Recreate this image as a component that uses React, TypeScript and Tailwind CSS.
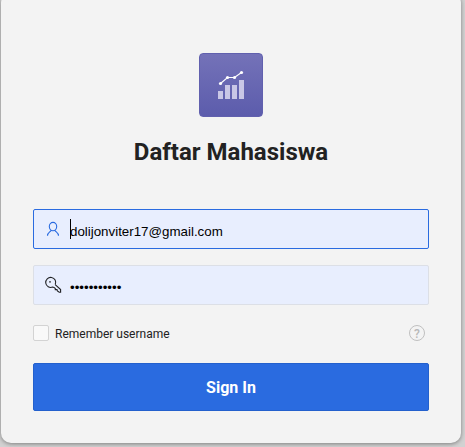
import { useState } from "react";

function ChartLogo() {
  return (
    <div className="h-16 w-16 rounded-[4px] border border-[#6160ae] bg-linear-to-b from-[#7472b8] to-[#5c5cac]">
      <svg viewBox="0 0 64 64" className="-m-px block h-16 w-16">
        <g fill="#c9c7e6">
          <rect x="19" y="38" width="5" height="8" />
          <rect x="26" y="32" width="5" height="14" />
          <rect x="33" y="32" width="5" height="14" />
          <rect x="40" y="27" width="5" height="19" />
        </g>
        <path d="M21.5 30.5 28.5 24.5H35.5L42.5 19.5" fill="none" stroke="#fff" strokeWidth="1.1" />
        <g fill="#fff">
          <circle cx="21.5" cy="30.5" r="1.6" />
          <circle cx="28.5" cy="24.5" r="1.6" />
          <circle cx="35.5" cy="24.5" r="1.6" />
          <circle cx="42.5" cy="19.5" r="1.6" />
        </g>
      </svg>
    </div>
  );
}

function UserIcon() {
  return (
    <svg viewBox="0 0 16 16" className="block h-4 w-4" fill="none" stroke="#2a6be0" strokeWidth="1.1">
      <ellipse cx="8" cy="5.6" rx="3.7" ry="4.2" />
      <path d="M6 9.3C5.6 11 2.5 11.2 2.5 14.8M10 9.3C10.4 11 13.5 11.2 13.5 14.8" />
    </svg>
  );
}

function KeyIcon() {
  return (
    <svg viewBox="0 0 18 18" className="block h-[18px] w-[18px]" fill="none" stroke="#202124" strokeWidth="1.1">
      <path d="M11.2 8.6A5 5 0 1 0 8.7 11L10 11.4 11.3 12.5V13.6H13L13.4 15 15.2 16.3H16.6V13.5L11.2 8.6" />
      <circle cx="6" cy="5.9" r=".8" fill="#202124" stroke="none" />
    </svg>
  );
}

export default function App() {
  const [remember, setRemember] = useState(false);
  return (
    <div className="h-[447px] w-[465px] overflow-hidden bg-[#d2d2d2] pl-px font-['Roboto',sans-serif] text-[#222]">
      <main className="-mt-[7px] h-[450px] w-[460px] rounded-[10px] bg-[#f3f3f3] px-8 pt-[60px] shadow-[0_1px_4px_rgba(0,0,0,0.4)]">
        <div className="flex justify-center">
          <ChartLogo />
        </div>
        <h1 className="mt-[19px] text-center text-2xl leading-8 font-bold">Daftar Mahasiswa</h1>
        <form className="mt-[41px]" onSubmit={(e) => e.preventDefault()}>
          <div className="flex h-10 items-center rounded-[2px] border border-[#2a6be0] bg-[#e8eefe] pl-[11px]">
            <UserIcon />
            <span className="ml-[9px] h-5 w-px bg-black" />
            <span className="-ml-px pt-[5px] font-['Liberation_Sans',sans-serif] text-[13.333px] leading-5 text-black">
              dolijonviter17@gmail.com
            </span>
          </div>
          <div className="mt-4 flex h-10 items-center rounded-[2px] border border-[#dcdfe6] bg-[#e8eefe] pl-[10px]">
            <KeyIcon />
            <span className="ml-2 pt-1.5 font-['Liberation_Sans',sans-serif] text-[13.333px] leading-5 text-black">
              •••••••••••
            </span>
          </div>
          <div className="mt-5 flex h-4 items-center justify-between">
            <label className="flex items-center gap-1.5 text-xs">
              <input
                type="checkbox"
                checked={remember}
                onChange={(e) => setRemember(e.target.checked)}
                className="h-4 w-4 appearance-none rounded-[2px] border border-[#d3d3d3] bg-[#f9f9f9] checked:bg-[#2a6be0]"
              />
              <span className="pt-0.5">Remember username</span>
            </label>
            <span className="mr-1 flex h-4 w-4 items-center justify-center rounded-full border border-[#c0c0c0] pt-px text-xs leading-none font-medium text-[#b8b8b8]">
              ?
            </span>
          </div>
          <button className="mt-[22px] block h-12 w-full rounded-[2px] border border-[#2360cd] bg-[#2a6be0] pt-0.5 text-base font-bold text-white">
            Sign In
          </button>
        </form>
      </main>
    </div>
  );
}
